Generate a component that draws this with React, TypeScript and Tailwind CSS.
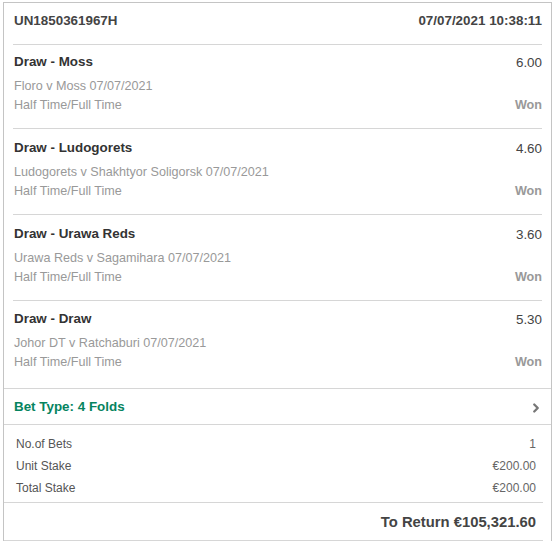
import { ChevronRight } from "lucide-react";

const selections = [
  { pick: "Draw - Moss", odds: "6.00", event: "Floro v Moss 07/07/2021" },
  { pick: "Draw - Ludogorets", odds: "4.60", event: "Ludogorets v Shakhtyor Soligorsk 07/07/2021" },
  { pick: "Draw - Urawa Reds", odds: "3.60", event: "Urawa Reds v Sagamihara 07/07/2021" },
  { pick: "Draw - Draw", odds: "5.30", event: "Johor DT v Ratchaburi 07/07/2021" },
];

const stakes = [
  { label: "No.of Bets", value: "1" },
  { label: "Unit Stake", value: "€200.00" },
  { label: "Total Stake", value: "€200.00" },
];

export default function App() {
  return (
    <div className="min-h-[548px] bg-white pt-[2px] font-['Liberation_Sans',Arial,sans-serif]">
      <div className="ml-[3px] w-[549px] border-l border-r border-t border-[#c4c4c4] bg-white">
        {/* Header */}
        <div className="px-[9px]">
          <div className="flex items-center justify-between border-b border-[#d6d6d6] pl-px pt-[8px] pb-[13px] text-[13.4px] font-bold leading-[20px] text-[#444]">
            <span>UN1850361967H</span>
            <span>07/07/2021 10:38:11</span>
          </div>
        </div>

        {/* Selections */}
        <div className="border-b border-[#d6d6d6] px-[9px]">
          {selections.map((s, i) => {
            const first = i === 0;
            const last = i === selections.length - 1;
            return (
              <div
                key={i}
                className={`pl-px ${first ? "pt-[7px]" : last ? "pt-[8px]" : "pt-[9px]"} ${last ? "pb-[16px]" : "border-b border-[#d6d6d6] pb-[13px]"}`}
              >
                <div className="flex h-[20px] items-center justify-between">
                  <span className="text-[13.4px] font-bold text-[#333]">{s.pick}</span>
                  <span className="mt-[3px] text-[13.4px] text-[#444]">{s.odds}</span>
                </div>
                <div className="mt-[5px] text-[12.6px] leading-[19px] text-[#999]">
                  <div>{s.event}</div>
                  <div className="flex justify-between">
                    <span>Half Time/Full Time</span>
                    <span className="font-bold">Won</span>
                  </div>
                </div>
              </div>
            );
          })}
        </div>

        {/* Bet type */}
        <div className="flex h-[36px] items-center justify-between border-b border-[#d6d6d6] pl-[10px] pr-[8px]">
          <span className="mt-[1px] text-[13.4px] font-bold text-[#06845f]">Bet Type: 4 Folds</span>
          <ChevronRight size={14} strokeWidth={4} className="mt-[3px] text-[#777]" />
        </div>

        {/* Stakes */}
        <div className="mr-[8px] border-b border-[#d6d6d6] pt-[8px] pb-[3px] pl-[12px] pr-[7px] text-[12px] leading-[22px]">
          {stakes.map((row) => (
            <div key={row.label} className="flex justify-between">
              <span className="text-[#555]">{row.label}</span>
              <span className="text-[#666]">{row.value}</span>
            </div>
          ))}
        </div>

        {/* Return */}
        <div className="mr-[8px] flex justify-end border-b border-[#d6d6d6] pt-[8px] pb-[7px] pr-[7px] text-[14.8px] font-bold leading-[22px] text-[#444]">
          To Return €105,321.60
        </div>
      </div>
    </div>
  );
}
